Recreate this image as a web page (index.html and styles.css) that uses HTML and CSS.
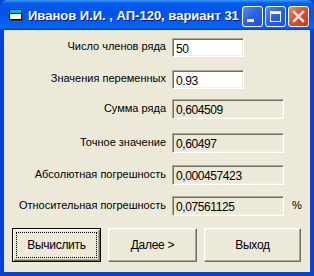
FILE: index.html
```html
<!DOCTYPE html>
<html lang="ru">
<head>
  <meta charset="UTF-8">
  <meta name="viewport" content="width=device-width, initial-scale=1.0">
  <title>Ряд</title>
  <link rel="stylesheet" href="styles.css">
</head>
<body>
  <div class="window">
    <div class="titlebar">
      <svg class="app-icon" width="15" height="13" viewBox="0 0 15 13">
        <rect x="0.5" y="0.5" width="12" height="10" fill="#fff" stroke="#000"/>
        <rect x="1" y="1" width="11" height="3" fill="#0fb8b8"/>
        <line x1="1" y1="4.5" x2="12" y2="4.5" stroke="#000"/>
        <path d="M13 2 V11.5 H2" fill="none" stroke="#334" stroke-width="1.2"/>
      </svg>
      <span class="title">Иванов И.И. , АП-120, вариант 31</span>
      <div class="controls">
        <span class="ctl ctl-min"></span>
        <span class="ctl ctl-max"></span>
        <span class="ctl ctl-close">
          <svg width="13" height="13" viewBox="0 0 13 13">
            <path d="M2 2 L11 11 M11 2 L2 11" stroke="#fff" stroke-width="2.4" stroke-linecap="square"/>
          </svg>
        </span>
      </div>
    </div>

    <div class="client">
      <div class="form">
        <div class="row row-1">
          <span class="label">Число членов ряда</span>
          <span class="edit short">50</span>
        </div>
        <div class="row row-2">
          <span class="label">Значения переменных</span>
          <span class="edit short">0.93</span>
        </div>
        <div class="row row-3">
          <span class="label">Сумма ряда</span>
          <span class="edit readonly">0,604509</span>
        </div>
        <div class="row row-4">
          <span class="label">Точное значение</span>
          <span class="edit readonly">0,60497</span>
        </div>
        <div class="row row-5">
          <span class="label">Абсолютная погрешность</span>
          <span class="edit readonly">0,000457423</span>
        </div>
        <div class="row row-6">
          <span class="label">Относительная погрешность</span>
          <span class="edit readonly">0,07561125</span>
          <span class="unit">%</span>
        </div>
      </div>

      <div class="buttons">
        <button class="btn btn-default">Вычислить</button>
        <button class="btn">Далее &gt;</button>
        <button class="btn btn-wide">Выход</button>
      </div>
    </div>
  </div>
</body>
</html>
```

FILE: styles.css
```css
body {
  margin: 0;
  font-family: "Liberation Sans", Arial, sans-serif;
  font-size: 11px;
  color: #000;
  background: #fff;
}

.window {
  width: 314px;
  height: 276px;
  display: flex;
  flex-direction: column;
  background: #0842d7;
}

/* title bar */
.titlebar {
  height: 30px;
  flex: none;
  display: flex;
  align-items: center;
  padding: 0 5px 0 9px;
  box-sizing: border-box;
  border-radius: 7px 7px 0 0;
  background: linear-gradient(#3d95ff 0, #0a5fe8 3px, #0058ee 6px, #0054e6 45%, #0462f2 85%, #0a66f8 92%, #0050e0 96%, #003dd0 100%);
}

.app-icon {
  flex: none;
  margin-top: 1px;
}

.title {
  margin-left: 4px;
  font-weight: bold;
  font-size: 13px;
  color: #fff;
  text-shadow: 1px 1px #0a1b8a;
  white-space: nowrap;
  flex: 1;
  margin-top: 1px;
}

.controls {
  display: flex;
  gap: 2px;
  margin-top: 3px;
}

.ctl {
  width: 21px;
  height: 21px;
  box-sizing: border-box;
  border: 1px solid #fff;
  border-radius: 3px;
  background: linear-gradient(135deg, #5a8cf8 0, #2a63ea 45%, #1b4fdc 100%);
  position: relative;
  display: flex;
  align-items: center;
  justify-content: center;
}

.ctl-min::after {
  content: "";
  position: absolute;
  left: 4px;
  bottom: 4px;
  width: 7px;
  height: 3px;
  background: #fff;
}

.ctl-max::after {
  content: "";
  width: 9px;
  height: 7px;
  border: 1px solid #fff;
  border-top-width: 3px;
}

.ctl-close {
  background: linear-gradient(135deg, #f08a6c 0, #e0502e 45%, #c8391c 100%);
}

/* client area */
.client {
  flex: 1;
  margin: 0 4px 4px 4px;
  background: #ece9d8;
  display: flex;
  flex-direction: column;
}

.form {
  display: flex;
  flex-direction: column;
}

.row {
  display: flex;
  align-items: center;
}

.row-1 { margin-top: 8px; }
.row-2 { margin-top: 13px; }
.row-3 { margin-top: 10px; }
.row-4 { margin-top: 14px; }
.row-5 { margin-top: 12px; }
.row-6 { margin-top: 11px; }

.label {
  width: 162px;
  margin-right: 6px;
  text-align: right;
  margin-top: -3px;
}

.edit {
  height: 20px;
  box-sizing: border-box;
  padding: 3px 0 0 3px;
  border: 1px solid;
  border-color: #aca899 #fff #fff #aca899;
  box-shadow: inset 1px 1px #716f64, inset -1px -1px #f1efe2;
  background: #fff;
  font-size: 12px;
  letter-spacing: -0.4px;
  line-height: 14px;
}

.edit.short {
  width: 72px;
  height: 19px;
}

.edit.readonly {
  width: 112px;
  background: #ece9d8;
}

.unit {
  margin-left: 8px;
  margin-top: -2px;
}

/* buttons */
.buttons {
  display: flex;
  gap: 6px;
  margin: 12px 0 0 8px;
}

.btn {
  width: 89px;
  height: 34px;
  font-family: "Liberation Sans", Arial, sans-serif;
  font-size: 12px;
  letter-spacing: -0.3px;
  color: #000;
  background: #ece9d8;
  border: 1px solid;
  border-color: #fff #716f64 #716f64 #fff;
  box-shadow: inset -1px -1px #aca899, inset 1px 1px #f1efe2;
  padding: 0;
  position: relative;
}

.btn + .btn {
  margin-left: 1px;
}

.btn-wide {
  width: 97px;
}

.btn-default {
  border-color: #000;
  box-shadow: inset 1px 1px #fff, inset -1px -1px #716f64, inset -2px -2px #aca899;
}

.btn-default::after {
  content: "";
  position: absolute;
  inset: 3px;
  border: 1px dotted #000;
}
```
